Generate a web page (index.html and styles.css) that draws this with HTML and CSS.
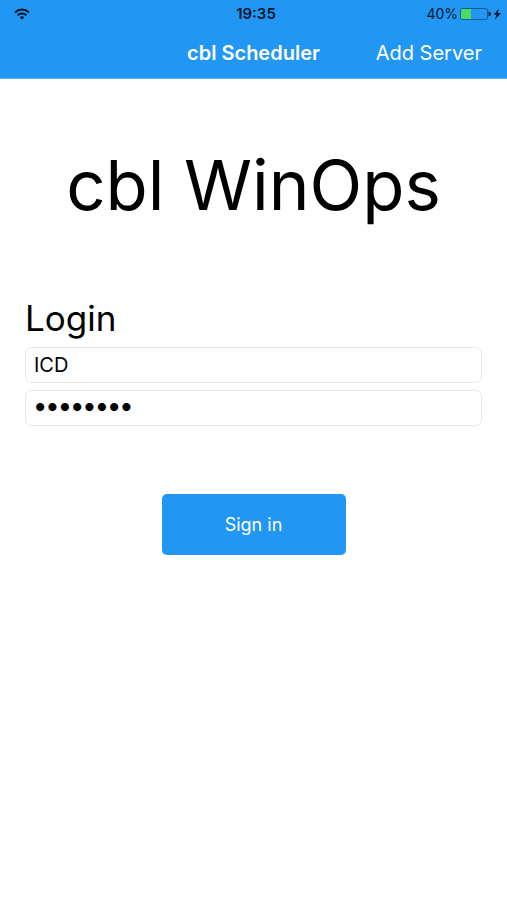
FILE: index.html
```html
<!DOCTYPE html>
<html lang="en">
<head>
<meta charset="utf-8">
<meta name="viewport" content="width=device-width, initial-scale=1">
<title>cbl Scheduler</title>
<link rel="stylesheet" href="styles.css">
</head>
<body>
<header class="top">
  <div class="status">
    <svg class="wifi" width="16" height="12" viewBox="0 0 16 12" fill="none" stroke="currentColor" stroke-width="2" aria-hidden="true">
      <path d="M1 4.4a10.2 10.2 0 0 1 14 0M3.6 7.2a6.4 6.4 0 0 1 8.8 0"/>
      <path d="M8 11.6 5.7 9.3a3.3 3.3 0 0 1 4.6 0z" fill="currentColor" stroke="none"/>
    </svg>
    <span class="clock">19:35</span>
    <span class="power">
      <span>40%</span>
      <svg width="44" height="14" viewBox="0 0 44 14" aria-hidden="true">
        <rect x="1.5" y="1.500" width="27" height="11" rx="2" fill="none" stroke="#0d5a97"/>
        <path d="M3.500 2H12v10H3.500A1.500 1.500 0 0 1 2 10.500v-7A1.500 1.500 0 0 1 3.500 2z" fill="#4cd964"/>
        <path d="M29.500 4.500a2.500 2.500 0 0 1 0 5z" fill="#06243f"/>
        <path d="M40 1.800 34.500 7.800h3L36 12.500l6-6.500h-3.300z" fill="#06192b"/>
      </svg>
    </span>
  </div>
  <nav class="bar">
    <h1 class="title">cbl Scheduler</h1>
    <a class="add" href="#add">Add Server</a>
  </nav>
</header>
<main class="main">
  <p class="brand">cbl WinOps</p>
  <form class="login">
    <h2 class="heading">Login</h2>
    <input class="field" type="text" aria-label="User name" value="ICD">
    <input class="field secret" type="password" aria-label="Password" value="password">
    <button class="submit" type="button">Sign in</button>
  </form>
</main>
</body>
</html>
```
FILE: styles.css
```css
* {
  box-sizing: border-box;
}

body {
  margin: 0;
  background: #fff;
  color: #000;
  font-family: Inter, "Liberation Sans", sans-serif;
}

.top {
  background: #2196f3;
  border-bottom: 1px solid #5db2f6;
}

.status {
  display: grid;
  grid-template-columns: 1fr auto 1fr;
  align-items: center;
  height: 27px;
  padding: 0 4px 0 14px;
  color: #06192b;
  font-size: 14px;
}

.wifi {
  display: block;
}

.clock {
  margin-right: 5px;
  font-size: 15px;
  font-weight: 600;
}

.power {
  display: flex;
  justify-content: flex-end;
  align-items: center;
  gap: 1px;
}

.bar {
  display: grid;
  grid-template-columns: 1fr auto 1fr;
  align-items: center;
  height: 51px;
  padding: 0 25px;
  color: #fff;
  font-size: 20px;
}

.title {
  grid-column: 2;
  margin: 0;
  font-size: 20px;
  font-weight: 600;
}

.add {
  justify-self: end;
  color: inherit;
  text-decoration: none;
}

.main {
  padding: 64px 25px 0;
}

.brand {
  margin: 0;
  font-size: 69px;
  line-height: 84px;
  text-align: center;
  white-space: nowrap;
}

.login {
  display: flex;
  flex-direction: column;
  gap: 7px;
  margin-top: 71px;
}

.heading {
  margin: 0 0 2px;
  font-size: 35px;
  font-weight: 400;
  line-height: 40px;
}

.field {
  width: 100%;
  height: 36px;
  padding: 0 8px;
  border: 1px solid #e8e8e8;
  border-radius: 6px;
  background: #fff;
  color: #000;
  font: inherit;
  font-size: 20px;
}

.secret {
  padding-bottom: 5px;
  font-size: 26px;
  font-weight: 700;
}

.submit {
  align-self: center;
  width: 184px;
  height: 61px;
  margin-top: 61px;
  border: 0;
  border-radius: 5px;
  background: #2196f3;
  color: #fff;
  font: inherit;
  font-size: 18px;
}
```
